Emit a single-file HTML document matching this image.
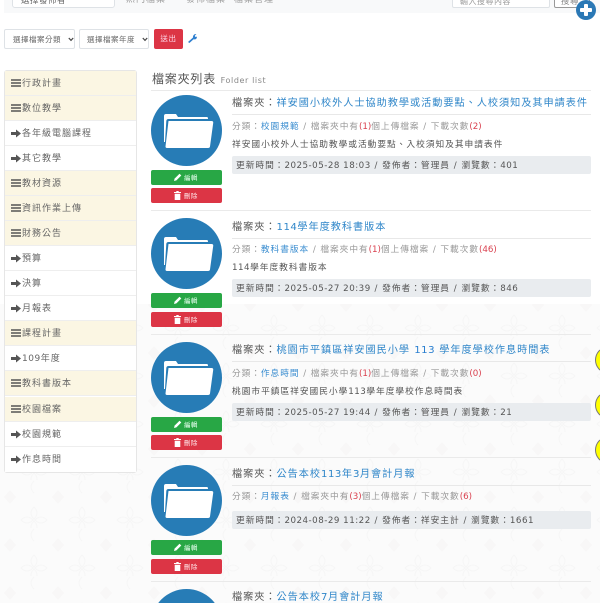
<!DOCTYPE html>
<html style="height:603px;overflow:hidden"><head><meta charset="utf-8"><style>
html,body{margin:0;padding:0}
body{width:600px;height:603px;position:relative;overflow:hidden;background:#fbfbfb;font-family:"DejaVu Sans","Noto Sans CJK TC",sans-serif;color:#555}
div{position:absolute;white-space:nowrap}
i{font-style:normal;letter-spacing:.5px}
#w{left:0;top:0;width:600px;height:603px;overflow:hidden;filter:blur(.3px)}
.nb{font-size:9px;letter-spacing:1px;color:#999;top:-6px;line-height:12px;height:10px;overflow:hidden}
.sel{background:#fff;border:1px solid #dee2e6;border-radius:2px;box-sizing:border-box;font-size:7.5px;letter-spacing:.5px;color:#666}
.row{left:5px;width:131px;height:25px;box-sizing:border-box;border-bottom:1px solid #eee;font-size:9px;letter-spacing:1px;line-height:27px;color:#666;padding-left:17px;background:#fff}
.y{background:#fbf6e3}
.row svg{position:absolute;left:6px;top:8px}
.sep{left:151px;width:440px;height:1px;background:#eaeaea}
.c{left:151px;width:71px;height:71px;border-radius:50%;background:#277cb6}
.c svg{position:absolute;left:13px;top:19px}
.g,.r{left:151px;width:71px;height:15px;border-radius:2px;color:#e8fff0;font-size:6.5px;line-height:16px;letter-spacing:.4px;box-sizing:border-box;padding-left:33px}
.g{background:#28a745}.r{background:#dc3545;color:#ffe8ea}
.g svg,.r svg{position:absolute;left:23px;top:3px}
.t{left:232px;font-size:10.14px;letter-spacing:1px;color:#555;line-height:14px}
.t span{color:#2f86c9}
.l{left:232px;width:359px;height:1px;background:#e8e8e8}
.m{left:232px;font-size:8.7px;letter-spacing:.95px;color:#999;line-height:12px}
.m span{color:#3a8dd0}.m b{font-weight:normal;color:#d9414f;letter-spacing:0}
.d{left:232px;font-size:8.7px;letter-spacing:1px;color:#555;line-height:12px}
.u{left:232px;width:359px;height:18px;background:#e9ecef;border-radius:2px;box-sizing:border-box;padding-left:4px;font-size:8.7px;letter-spacing:1px;line-height:20px;color:#555}
.yc{left:595px;width:5px;height:26px;overflow:hidden}
.ye{left:0;top:0;width:24px;height:26px;border-radius:50%;background:#ff0;border:1px solid #777;box-sizing:border-box}
</style></head><body><div id="w">
<svg style="position:absolute;left:0;top:0" width="600" height="603"><defs><pattern id="p" width="48" height="48" patternUnits="userSpaceOnUse"><g fill="none" stroke="#f6f6f6"><path d="M34 27c-4 4-4 8 0 12 4-4 4-8 0-12zM34 53c-4-4-4-8 0-12 4 4 4 8 0 12zM21 40c4-4 8-4 12 0-4 4-8 4-12 0zM47 40c-4-4-8-4-12 0 4 4 8 4 12 0z"/><path d="M34 1c-4 4-4 8 0 12"/></g><path d="M10 10l6 7-6 7-6-7z" fill="#f8f7f7"/></pattern></defs><rect width="600" height="603" fill="url(#p)"/><rect width="600" height="304" fill="#fff"/></svg>
<div style="left:4px;top:0;width:596px;height:13px;background:#f8f9fa"></div>
<div class="sel" style="left:12px;top:-12px;width:103px;height:20px;border-radius:3px;padding:5px 8px;line-height:14px;font-size:8.5px">選擇發佈者</div>
<div class="nb" style="left:126px">熱門檔案</div>
<div class="nb" style="left:186px">發佈檔案</div>
<div class="nb" style="left:234px">檔案管理</div>
<div class="sel" style="left:452px;top:-12px;width:98px;height:20px;padding:4px 7px;line-height:18px;color:#999;font-size:8px">輸入搜尋內容</div>
<div class="sel" style="left:554px;top:-12px;width:36px;height:20px;border-color:#999;padding:4px 6px;line-height:18px;color:#888;font-size:8.5px">搜尋</div>
<div style="left:575.500px;top:-.5px;width:20px;height:20px;border-radius:50%;background:#2a78b5"></div>
<div style="left:579.500px;top:7.500px;width:12px;height:4px;background:#fff;border-radius:1px"></div>
<div style="left:583.500px;top:3.500px;width:4px;height:12px;background:#fff;border-radius:1px"></div>

<div class="sel" style="left:4px;top:29px;width:71px;height:20px;padding:3px 0 0 8px;line-height:14px">選擇檔案分類<svg style="position:absolute;left:63px;top:7px" width="6" height="5"><path d="M.8 1l2.200 2.400L5.200 1" fill="none" stroke="#444" stroke-width="1.200"/></svg></div>
<div class="sel" style="left:79px;top:29px;width:70px;height:20px;padding:3px 0 0 7px;line-height:14px">選擇檔案年度<svg style="position:absolute;left:62px;top:7px" width="6" height="5"><path d="M.8 1l2.200 2.400L5.200 1" fill="none" stroke="#444" stroke-width="1.200"/></svg></div>
<div style="left:154px;top:29px;width:29px;height:20px;background:#dc3545;border-radius:2px;color:#fde;font-size:7.500px;letter-spacing:.6px;line-height:20px;text-align:center">送出</div>
<svg style="position:absolute;left:187px;top:33px" width="11" height="10" viewBox="0 0 11 10"><path d="M1 9L6 4.500C5.800 2.600 7 .8 9.400 1L7.800 2.800 8.400 4 9.800 3.600C10.400 5.400 8.400 7 6.600 6.200L2.400 10z" fill="#2f80d0"/></svg>

<div style="left:4px;top:70px;width:133px;height:403px;background:#fff;border:1px solid #e6e6e6;border-radius:3px;box-sizing:border-box"></div>
<div class="row y" style="top:71px">行政計畫<svg width="10" height="9"><path d="M0 1h10M0 4h10M0 7h10" stroke="#555" stroke-width="1.600" fill="none"/></svg></div>
<div class="row y" style="top:96px">數位教學<svg width="10" height="9"><path d="M0 1h10M0 4h10M0 7h10" stroke="#555" stroke-width="1.600" fill="none"/></svg></div>
<div class="row" style="top:121px">各年級電腦課程<svg width="10" height="9"><path d="M0 3h5V.5l5 4-5 4V6H0z" fill="#555"/></svg></div>
<div class="row" style="top:146px">其它教學<svg width="10" height="9"><path d="M0 3h5V.5l5 4-5 4V6H0z" fill="#555"/></svg></div>
<div class="row y" style="top:171px">教材資源<svg width="10" height="9"><path d="M0 1h10M0 4h10M0 7h10" stroke="#555" stroke-width="1.600" fill="none"/></svg></div>
<div class="row y" style="top:196px">資訊作業上傳<svg width="10" height="9"><path d="M0 1h10M0 4h10M0 7h10" stroke="#555" stroke-width="1.600" fill="none"/></svg></div>
<div class="row y" style="top:221px">財務公告<svg width="10" height="9"><path d="M0 1h10M0 4h10M0 7h10" stroke="#555" stroke-width="1.600" fill="none"/></svg></div>
<div class="row" style="top:246px">預算<svg width="10" height="9"><path d="M0 3h5V.5l5 4-5 4V6H0z" fill="#555"/></svg></div>
<div class="row" style="top:271px">決算<svg width="10" height="9"><path d="M0 3h5V.5l5 4-5 4V6H0z" fill="#555"/></svg></div>
<div class="row" style="top:296px">月報表<svg width="10" height="9"><path d="M0 3h5V.5l5 4-5 4V6H0z" fill="#555"/></svg></div>
<div class="row y" style="top:321px">課程計畫<svg width="10" height="9"><path d="M0 1h10M0 4h10M0 7h10" stroke="#555" stroke-width="1.600" fill="none"/></svg></div>
<div class="row" style="top:346px"><i>109</i>年度<svg width="10" height="9"><path d="M0 3h5V.5l5 4-5 4V6H0z" fill="#555"/></svg></div>
<div class="row y" style="top:371px">教科書版本<svg width="10" height="9"><path d="M0 1h10M0 4h10M0 7h10" stroke="#555" stroke-width="1.600" fill="none"/></svg></div>
<div class="row y" style="top:397px">校園檔案<svg width="10" height="9"><path d="M0 1h10M0 4h10M0 7h10" stroke="#555" stroke-width="1.600" fill="none"/></svg></div>
<div class="row" style="top:422px">校園規範<svg width="10" height="9"><path d="M0 3h5V.5l5 4-5 4V6H0z" fill="#555"/></svg></div>
<div class="row" style="top:447px;border-bottom:0">作息時間<svg width="10" height="9"><path d="M0 3h5V.5l5 4-5 4V6H0z" fill="#555"/></svg></div>

<div style="left:152px;top:70px;font-size:12px;letter-spacing:.8px;color:#555;line-height:18px">檔案夾列表 <span style="font-size:8px;color:#888;letter-spacing:.6px">Folder list</span></div>
<div class="sep" style="top:90px"></div>

<div class="c" style="top:95px"><svg width="50" height="36" viewBox="0 0 50 36"><path d="M0 28V2q0-2 2-2h10l2 3h29q1 0 1 2H4.500q-2 0-2.200 2L1 28z" fill="#fff"/><path d="M4.500 7h43q2 0 1.700 2L46 32.500q-.2 1.500-2 1.500H3q-1.500 0-1.500-1.500z" fill="#fff"/></svg></div>
<div class="g" style="top:170px"><svg width="8" height="8" viewBox="0 0 8 8"><path d="M0 8l.6-2.400L5.500.7l1.800 1.800L2.400 7.400z" fill="#fff"/></svg>編輯</div>
<div class="r" style="top:188px"><svg width="7" height="9" viewBox="0 0 7 9"><path d="M0 1h2.300V0h2.400v1H7v1H0zM.7 2.700h5.600V9H.7z" fill="#fff"/></svg>刪除</div>
<div class="t" style="top:97px">檔案夾：<span>祥安國小校外人士協助教學或活動要點、人校須知及其申請表件</span></div>
<div class="l" style="top:114px"></div>
<div class="m" style="top:121px">分類：<span>校園規範</span> / 檔案夾中有<b>(1)</b>個上傳檔案 / 下載次數<b>(2)</b></div>
<div class="d" style="top:139px">祥安國小校外人士協助教學或活動要點、入校須知及其申請表件</div>
<div class="u" style="top:156px">更新時間：<i>2025-05-28 18:03</i> / 發佈者：管理員 / 瀏覽數：<i>401</i></div>
<div class="sep" style="top:210px"></div>

<div class="c" style="top:218px"><svg width="50" height="36" viewBox="0 0 50 36"><path d="M0 28V2q0-2 2-2h10l2 3h29q1 0 1 2H4.500q-2 0-2.200 2L1 28z" fill="#fff"/><path d="M4.500 7h43q2 0 1.700 2L46 32.500q-.2 1.500-2 1.500H3q-1.500 0-1.500-1.500z" fill="#fff"/></svg></div>
<div class="g" style="top:293px"><svg width="8" height="8" viewBox="0 0 8 8"><path d="M0 8l.6-2.400L5.500.7l1.800 1.800L2.400 7.400z" fill="#fff"/></svg>編輯</div>
<div class="r" style="top:312px"><svg width="7" height="9" viewBox="0 0 7 9"><path d="M0 1h2.300V0h2.400v1H7v1H0zM.7 2.700h5.600V9H.7z" fill="#fff"/></svg>刪除</div>
<div class="t" style="top:221px">檔案夾：<span><i>114</i>學年度教科書版本</span></div>
<div class="l" style="top:238px"></div>
<div class="m" style="top:244px">分類：<span>教科書版本</span> / 檔案夾中有<b>(1)</b>個上傳檔案 / 下載次數<b>(46)</b></div>
<div class="d" style="top:262px"><i>114</i>學年度教科書版本</div>
<div class="u" style="top:279px">更新時間：<i>2025-05-27 20:39</i> / 發佈者：管理員 / 瀏覽數：<i>846</i></div>
<div class="sep" style="top:334px"></div>

<div class="c" style="top:342px"><svg width="50" height="36" viewBox="0 0 50 36"><path d="M0 28V2q0-2 2-2h10l2 3h29q1 0 1 2H4.500q-2 0-2.200 2L1 28z" fill="#fff"/><path d="M4.500 7h43q2 0 1.700 2L46 32.500q-.2 1.500-2 1.500H3q-1.500 0-1.500-1.500z" fill="#fff"/></svg></div>
<div class="g" style="top:417px"><svg width="8" height="8" viewBox="0 0 8 8"><path d="M0 8l.6-2.400L5.500.7l1.800 1.800L2.400 7.400z" fill="#fff"/></svg>編輯</div>
<div class="r" style="top:435px"><svg width="7" height="9" viewBox="0 0 7 9"><path d="M0 1h2.300V0h2.400v1H7v1H0zM.7 2.700h5.600V9H.7z" fill="#fff"/></svg>刪除</div>
<div class="t" style="top:344px">檔案夾：<span>桃園市平鎮區祥安國民小學 <i style="color:#2a7fd0">113</i> 學年度學校作息時間表</span></div>
<div class="l" style="top:361px"></div>
<div class="m" style="top:368px">分類：<span>作息時間</span> / 檔案夾中有<b>(1)</b>個上傳檔案 / 下載次數<b>(0)</b></div>
<div class="d" style="top:386px">桃園市平鎮區祥安國民小學<i>113</i>學年度學校作息時間表</div>
<div class="u" style="top:403px">更新時間：<i>2025-05-27 19:44</i> / 發佈者：管理員 / 瀏覽數：<i>21</i></div>
<div class="sep" style="top:457px"></div>

<div class="c" style="top:465px"><svg width="50" height="36" viewBox="0 0 50 36"><path d="M0 28V2q0-2 2-2h10l2 3h29q1 0 1 2H4.500q-2 0-2.200 2L1 28z" fill="#fff"/><path d="M4.500 7h43q2 0 1.700 2L46 32.500q-.2 1.500-2 1.500H3q-1.500 0-1.500-1.500z" fill="#fff"/></svg></div>
<div class="g" style="top:540px"><svg width="8" height="8" viewBox="0 0 8 8"><path d="M0 8l.6-2.400L5.500.7l1.800 1.800L2.400 7.400z" fill="#fff"/></svg>編輯</div>
<div class="r" style="top:559px"><svg width="7" height="9" viewBox="0 0 7 9"><path d="M0 1h2.300V0h2.400v1H7v1H0zM.7 2.700h5.600V9H.7z" fill="#fff"/></svg>刪除</div>
<div class="t" style="top:468px">檔案夾：<span>公告本校<i>113</i>年<i>3</i>月會計月報</span></div>
<div class="l" style="top:485px"></div>
<div class="m" style="top:491px">分類：<span>月報表</span> / 檔案夾中有<b>(3)</b>個上傳檔案 / 下載次數<b>(6)</b></div>
<div class="u" style="top:511px">更新時間：<i>2024-08-29 11:22</i> / 發佈者：祥安主計 / 瀏覽數：<i>1661</i></div>
<div class="sep" style="top:581px"></div>

<div style="left:151px;top:589px;width:71px;height:14px;overflow:hidden"><div class="c" style="left:0;top:0"></div></div>
<div class="t" style="top:591px;height:12px;overflow:hidden">檔案夾：<span>公告本校<i>7</i>月會計月報</span></div>

<div class="yc" style="top:347px"><div class="ye"></div></div>
<div class="yc" style="top:392px"><div class="ye"></div></div>
<div class="yc" style="top:437px"><div class="ye"></div></div>
</div></body></html>
